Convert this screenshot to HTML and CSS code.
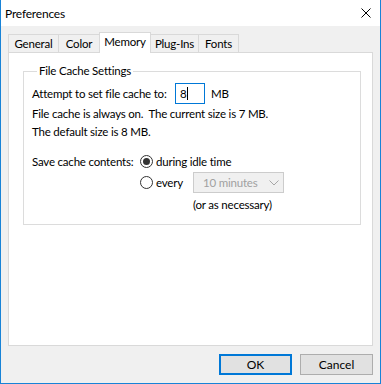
FILE: index.html
```html
<!DOCTYPE html>
<html lang="en">
<head>
  <meta charset="UTF-8">
  <title>Preferences</title>
  <link rel="stylesheet" href="styles.css">
</head>
<body>

  <div class="window">
      <div class="titlebar">
          <span class="title">Preferences</span>
          <svg class="close" width="10" height="10" viewBox="0 0 10 10">
              <path d="M0.5 0.5 L9.5 9.5 M9.5 0.5 L0.5 9.5" stroke="#000" stroke-width="1" fill="none"/>
          </svg>
      </div>

      <div class="content">
          <div class="tabs">
              <div class="tab tab-general">General</div>
              <div class="tab tab-color">Color</div>
              <div class="tab tab-memory active">Memory</div>
              <div class="tab tab-plugins">Plug-Ins</div>
              <div class="tab tab-fonts">Fonts</div>
          </div>

          <div class="panel">
              <fieldset class="group">
                  <legend>File Cache Settings</legend>

                  <div class="row row-size">
                      <label class="label-size" for="cacheSize">Attempt to set file cache to:</label>
                      <span class="textbox" id="cacheSize">8<span class="caret"></span></span>
                      <span class="unit">MB</span>
                  </div>
                  <div class="line">File cache is always on.&nbsp; The current size is 7 MB.</div>
                  <div class="line">The default size is 8 MB.</div>

                  <div class="row row-save">
                      <span class="label-save">Save cache contents:</span>
                      <input type="radio" class="radio" name="save" id="idle" checked>
                      <label class="radio-text" for="idle">during idle time</label>
                  </div>
                  <div class="row row-every">
                      <input type="radio" class="radio" name="save" id="every">
                      <label class="radio-text every-text" for="every">every</label>
                      <span class="combo">
                          <span class="combo-text">10 minutes</span>
                          <svg class="chevron" width="10" height="6" viewBox="0 0 10 6">
                              <path d="M0.5 0.5 L5 5 L9.5 0.5" stroke="#a6a6a6" stroke-width="1" fill="none"/>
                          </svg>
                      </span>
                  </div>
                  <div class="line note">(or as necessary)</div>
              </fieldset>
          </div>

          <div class="buttons">
              <button class="btn btn-default">OK</button>
              <button class="btn">Cancel</button>
          </div>
      </div>
  </div>

</body>
</html>
```

FILE: styles.css
```css
body {
  margin: 0;
  font-family: Lato, "Liberation Sans", sans-serif;
  font-size: 11.5px;
  letter-spacing: -0.2px;
  color: #000;
  white-space: nowrap;
}

.window {
  width: 381px;
  height: 384px;
  box-sizing: border-box;
  border: 1px solid #1883d7;
  border-top: none;
  background: #f0f0f0;
  display: flex;
  flex-direction: column;
}

.titlebar {
  height: 26px;
  flex: none;
  background: #fff;
  display: flex;
  align-items: center;
  justify-content: space-between;
  padding-left: 4px;
  font-size: 12px;
}

.close {
  margin-right: 9px;
}

.content {
  flex: 1;
  display: flex;
  flex-direction: column;
  padding: 6px 7px 8px 7px;
}

/* tab strip */
.tabs {
  display: flex;
  align-items: flex-end;
  height: 20px;
  flex: none;
}

.tab {
  box-sizing: border-box;
  height: 18px;
  border: 1px solid #d9d9d9;
  border-bottom: none;
  background: #f0f0f0;
  margin-left: -1px;
  display: flex;
  align-items: center;
  justify-content: center;
  line-height: 16px;
}

.tab-general { width: 51px; margin-left: 0; }
.tab-color { width: 42px; }
.tab-memory { width: 52px; }
.tab-plugins { width: 49px; }
.tab-fonts { width: 41px; }

.tab.active {
  height: 21px;
  margin-bottom: -1px;
  background: #fff;
  position: relative;
  z-index: 1;
  padding-bottom: 2px;
}

.panel {
  flex: 1;
  background: #fff;
  border: 1px solid #d9d9d9;
  display: flex;
  flex-direction: column;
}

/* group box */
.group {
  margin: 10px 11px 0 14px;
  padding: 4px 8px 10px 8px;
  border: 1px solid #dcdcdc;
  min-inline-size: 0;
}

.group legend {
  margin-left: 5px;
  padding: 0 2px;
  line-height: 16px;
}

.row {
  display: flex;
  align-items: center;
}

.row-size {
  height: 21px;
}

.label-size {
  width: 143px;
}

.textbox {
  box-sizing: border-box;
  width: 30px;
  height: 21px;
  border: 1px solid #0078d7;
  padding-left: 4px;
  display: flex;
  align-items: center;
}

.caret {
  width: 1px;
  height: 13px;
  background: #000;
  margin-left: 1px;
}

.unit {
  margin-left: 6px;
}

.line {
  height: 18px;
  line-height: 18px;
}

.row-size + .line {
  margin-top: 1px;
}

.row-save {
  height: 18px;
  margin-top: 11px;
}

.label-save {
  width: 108px;
}

.radio {
  appearance: none;
  box-sizing: border-box;
  width: 13px;
  height: 13px;
  margin: 0;
  border: 1px solid #333;
  border-radius: 50%;
  background: #fff;
  display: flex;
  align-items: center;
  justify-content: center;
}

.radio:checked::after {
  content: "";
  width: 7px;
  height: 7px;
  border-radius: 50%;
  background: #333;
}

.radio-text {
  margin-left: 3px;
}

.row-every {
  height: 21px;
  margin-top: 2px;
  padding-left: 108px;
}

.every-text {
  width: 37px;
}

.combo {
  box-sizing: border-box;
  width: 91px;
  height: 21px;
  border: 1px solid #cccccc;
  background: #f0f0f0;
  color: #a0a0a0;
  position: relative;
  display: flex;
  align-items: center;
  padding-left: 9px;
}

.chevron {
  position: absolute;
  right: 4px;
  top: 7px;
}

.note {
  margin-top: 3px;
  padding-left: 161px;
}

/* dialog buttons */
.buttons {
  display: flex;
  justify-content: flex-end;
  gap: 8px;
  margin-top: 8px;
  flex: none;
}

.btn {
  box-sizing: border-box;
  width: 73px;
  height: 21px;
  font-family: Lato, "Liberation Sans", sans-serif;
  font-size: 12px;
  color: #000;
  background: #e1e1e1;
  border: 1px solid #adadad;
  padding: 0;
}

.btn-default {
  border: 2px solid #0078d7;
}
```
